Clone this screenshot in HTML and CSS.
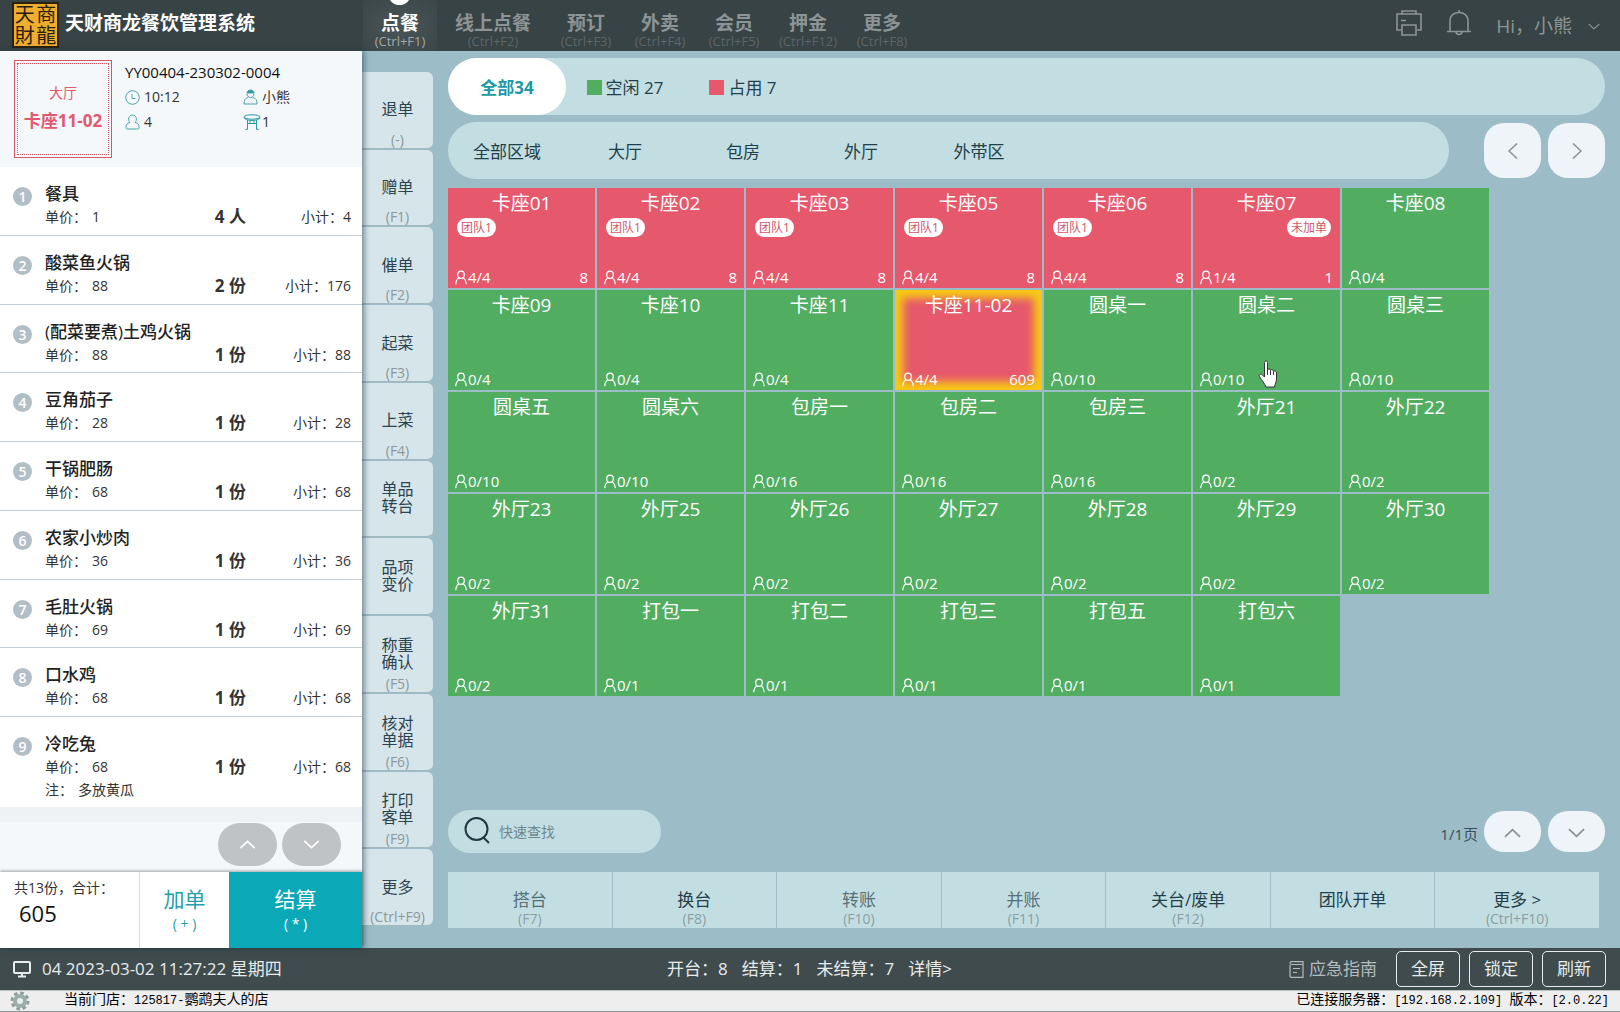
FILE: index.html
```html
<!DOCTYPE html>
<html lang="zh-CN">
<head>
<meta charset="utf-8">
<meta name="viewport" content="width=device-width, initial-scale=1">
<title>天财商龙餐饮管理系统</title>
<link rel="stylesheet" href="styles.css">
</head>
<body>
<svg class="symbols" width="0" height="0" aria-hidden="true">
  <symbol id="guest" viewBox="0 0 12 15"><path d="M6 1.2a3.3 3.6 0 0 1 0 7.2a3.3 3.6 0 0 1 0-7.2M4 7.8C2 9 .9 11.300 .8 14.200M8 7.800C10 9 11.100 11.300 11.200 14.200" fill="none" stroke="currentColor" stroke-width="1.200"/></symbol>
  <symbol id="up" viewBox="0 0 18 10"><path d="M1 9L9 1.500L17 9" fill="none" stroke="currentColor" stroke-width="1.800"/></symbol>
  <symbol id="down" viewBox="0 0 18 10"><path d="M1 1L9 8.500L17 1" fill="none" stroke="currentColor" stroke-width="1.800"/></symbol>
</svg>

<header class="topbar">
  <div class="brand">
    <div class="logo" aria-hidden="true"><span>天</span><span>商</span><span>財</span><span>龍</span></div>
    <h1>天财商龙餐饮管理系统</h1>
  </div>
  <nav class="menu">
    <a href="#" class="active"><b>点餐</b><small>(Ctrl+F1)</small></a>
    <a href="#"><b>线上点餐</b><small>(Ctrl+F2)</small></a>
    <a href="#"><b>预订</b><small>(Ctrl+F3)</small></a>
    <a href="#"><b>外卖</b><small>(Ctrl+F4)</small></a>
    <a href="#"><b>会员</b><small>(Ctrl+F5)</small></a>
    <a href="#"><b>押金</b><small>(Ctrl+F12)</small></a>
    <a href="#"><b>更多</b><small>(Ctrl+F8)</small></a>
  </nav>
  <div class="tools">
    <button type="button" class="tool" aria-label="打印"><svg width="26" height="26" viewBox="0 0 26 26" fill="none" stroke="currentColor" stroke-width="1.600"><path d="M5 20H1V4H25V20H21M6 4V1H20V4M6 15H20V25H6ZM5 10.500H10"/></svg></button>
    <button type="button" class="tool" aria-label="通知"><svg width="26" height="26" viewBox="0 0 26 26" fill="none" stroke="currentColor" stroke-width="1.600"><path d="M1 21.500H25M4 21.500V11C4 5.500 8 2.500 13 2.500S22 5.500 22 11V21.500M13 0V2.500M10 21.500C10 25.500 16 25.500 16 21.500"/></svg></button>
    <button type="button" class="user">Hi，小熊<svg width="12" height="7" viewBox="0 0 18 10"><use href="#down"/></svg></button>
  </div>
</header>

<main class="workspace">
  <aside class="order">
    <section class="order-head">
      <div class="seat"><div class="seat-inner"><span>大厅</span><b>卡座11-02</b></div></div>
      <div class="facts">
        <p class="bill-no">YY00404-230302-0004</p>
        <p><svg width="15" height="15" viewBox="0 0 15 15" fill="none" stroke="#4aa3aa"><circle cx="7.500" cy="7.500" r="6.800"/><path d="M7 4V8.500H10.500"/></svg>10:12</p>
        <p><svg width="15" height="16" viewBox="0 0 15 16" fill="none" stroke="#4aa3aa"><path d="M4 4C4 0 11 0 11 4Z" fill="#2b9aa3"/><path d="M4 4.500C4 7 5.500 8.500 7.500 8.500S11 7 11 4.500M5 8.500C2 9.500 1 11 1 15H14C14 11 13 9.500 10 8.500"/></svg>小熊</p>
        <p><svg width="15" height="16" viewBox="0 0 15 16" fill="none" stroke="#4aa3aa"><path d="M5 8.500C2.500 6 3.500 1 7.500 1S12.500 6 10 8.500C13 9 14 10.500 14 13.500C14 15 13.500 15 12.500 15H2.500C1.500 15 1 15 1 13.500C1 10.500 2 9 5 8.500"/></svg>4</p>
        <p class="tables-used"><svg width="18" height="16" viewBox="0 0 18 16" fill="none" stroke="#2b9aa3"><ellipse cx="9" cy="3" rx="8" ry="2.200"/><path d="M1 3.500C2 7.500 16 7.500 17 3.500M4.500 6V15.500M2.500 15.500H4.500M7 7V10M11 7V10M13.500 6V15.500M13.500 15.500H15.500M4.500 9.500H13.500"/></svg>1</p>
      </div>
    </section>
    <ol class="dishes">
      <li><i>1</i><div><h2>餐具</h2><p class="line"><span>单价：<em>1</em></span><b>4 人</b><span>小计：4</span></p></div></li>
      <li><i>2</i><div><h2>酸菜鱼火锅</h2><p class="line"><span>单价：<em>88</em></span><b>2 份</b><span>小计：176</span></p></div></li>
      <li><i>3</i><div><h2>(配菜要煮)土鸡火锅</h2><p class="line"><span>单价：<em>88</em></span><b>1 份</b><span>小计：88</span></p></div></li>
      <li><i>4</i><div><h2>豆角茄子</h2><p class="line"><span>单价：<em>28</em></span><b>1 份</b><span>小计：28</span></p></div></li>
      <li><i>5</i><div><h2>干锅肥肠</h2><p class="line"><span>单价：<em>68</em></span><b>1 份</b><span>小计：68</span></p></div></li>
      <li><i>6</i><div><h2>农家小炒肉</h2><p class="line"><span>单价：<em>36</em></span><b>1 份</b><span>小计：36</span></p></div></li>
      <li><i>7</i><div><h2>毛肚火锅</h2><p class="line"><span>单价：<em>69</em></span><b>1 份</b><span>小计：69</span></p></div></li>
      <li><i>8</i><div><h2>口水鸡</h2><p class="line"><span>单价：<em>68</em></span><b>1 份</b><span>小计：68</span></p></div></li>
      <li><i>9</i><div><h2>冷吃兔</h2><p class="line"><span>单价：<em>68</em></span><b>1 份</b><span>小计：68</span></p><p class="note">注：<em>多放黄瓜</em></p></div></li>
    </ol>
    <div class="order-pager">
      <button type="button" aria-label="上一页"><svg width="17" height="9"><use href="#up"/></svg></button>
      <button type="button" aria-label="下一页"><svg width="17" height="9"><use href="#down"/></svg></button>
    </div>
    <footer class="order-foot">
      <div class="total"><span>共13份，合计：</span><strong>605</strong></div>
      <button type="button" class="add">加单<small>( + )</small></button>
      <button type="button" class="pay">结算<small>( * )</small></button>
    </footer>
  </aside>

  <nav class="side">
    <button type="button"><span>退单</span><small>(-)</small></button>
    <button type="button"><span>赠单</span><small>(F1)</small></button>
    <button type="button"><span>催单</span><small>(F2)</small></button>
    <button type="button"><span>起菜</span><small>(F3)</small></button>
    <button type="button"><span>上菜</span><small>(F4)</small></button>
    <button type="button"><span>单品<br>转台</span><small></small></button>
    <button type="button"><span>品项<br>变价</span><small></small></button>
    <button type="button"><span>称重<br>确认</span><small>(F5)</small></button>
    <button type="button"><span>核对<br>单据</span><small>(F6)</small></button>
    <button type="button"><span>打印<br>客单</span><small>(F9)</small></button>
    <button type="button"><span>更多</span><small>(Ctrl+F9)</small></button>
  </nav>

  <section class="floor">
    <div class="pill">
      <button type="button" class="tab selected">全部34</button>
      <button type="button" class="tab"><span class="swatch free"></span>空闲 27</button>
      <button type="button" class="tab"><span class="swatch busy"></span>占用 7</button>
    </div>
    <div class="areas">
      <div class="pill">
        <button type="button" class="tab">全部区域</button>
        <button type="button" class="tab">大厅</button>
        <button type="button" class="tab">包房</button>
        <button type="button" class="tab">外厅</button>
        <button type="button" class="tab">外带区</button>
      </div>
      <div class="arrows tall">
        <button type="button" aria-label="向左"><svg width="10" height="16" viewBox="0 0 10 16" fill="none" stroke="currentColor" stroke-width="1.500"><path d="M9 .5L1 8L9 15.500"/></svg></button>
        <button type="button" aria-label="向右"><svg width="10" height="16" viewBox="0 0 10 16" fill="none" stroke="currentColor" stroke-width="1.500"><path d="M1 .5L9 8L1 15.500"/></svg></button>
      </div>
    </div>

    <div class="tables">
      <button type="button" class="table busy"><span class="name">卡座01</span><span class="tag">团队1</span><span class="foot"><svg><use href="#guest"/></svg>4/4<span>8</span></span></button>
      <button type="button" class="table busy"><span class="name">卡座02</span><span class="tag">团队1</span><span class="foot"><svg><use href="#guest"/></svg>4/4<span>8</span></span></button>
      <button type="button" class="table busy"><span class="name">卡座03</span><span class="tag">团队1</span><span class="foot"><svg><use href="#guest"/></svg>4/4<span>8</span></span></button>
      <button type="button" class="table busy"><span class="name">卡座05</span><span class="tag">团队1</span><span class="foot"><svg><use href="#guest"/></svg>4/4<span>8</span></span></button>
      <button type="button" class="table busy"><span class="name">卡座06</span><span class="tag">团队1</span><span class="foot"><svg><use href="#guest"/></svg>4/4<span>8</span></span></button>
      <button type="button" class="table busy"><span class="name">卡座07</span><span class="tag end">未加单</span><span class="foot"><svg><use href="#guest"/></svg>1/4<span>1</span></span></button>
      <button type="button" class="table free"><span class="name">卡座08</span><span class="foot"><svg><use href="#guest"/></svg>0/4</span></button>

      <button type="button" class="table free"><span class="name">卡座09</span><span class="foot"><svg><use href="#guest"/></svg>0/4</span></button>
      <button type="button" class="table free"><span class="name">卡座10</span><span class="foot"><svg><use href="#guest"/></svg>0/4</span></button>
      <button type="button" class="table free"><span class="name">卡座11</span><span class="foot"><svg><use href="#guest"/></svg>0/4</span></button>
      <button type="button" class="table busy current"><span class="name">卡座11-02</span><span class="foot"><svg><use href="#guest"/></svg>4/4<span>609</span></span></button>
      <button type="button" class="table free"><span class="name">圆桌一</span><span class="foot"><svg><use href="#guest"/></svg>0/10</span></button>
      <button type="button" class="table free"><span class="name">圆桌二</span><span class="foot"><svg><use href="#guest"/></svg>0/10</span><svg class="pointer" width="20" height="28" viewBox="0 0 20 28"><path d="M6.500 2.500C6.500 .5 9.500 .5 9.500 2.500V10C10 8.500 12.500 8.500 12.500 10.500C13 9 15.500 9.500 15.500 11.500C16.500 10.500 18.500 11 18.500 13V19C18.500 22 17 23.500 16.500 27H8C7 23.500 3.500 20.500 1.500 16.500C.5 14.500 3 13.500 4.500 15L6.500 17Z" fill="#fff" stroke="#333"/><path d="M9.500 10V15M12.500 11V15M15.500 12V15" stroke="#333"/></svg></button>
      <button type="button" class="table free"><span class="name">圆桌三</span><span class="foot"><svg><use href="#guest"/></svg>0/10</span></button>

      <button type="button" class="table free"><span class="name">圆桌五</span><span class="foot"><svg><use href="#guest"/></svg>0/10</span></button>
      <button type="button" class="table free"><span class="name">圆桌六</span><span class="foot"><svg><use href="#guest"/></svg>0/10</span></button>
      <button type="button" class="table free"><span class="name">包房一</span><span class="foot"><svg><use href="#guest"/></svg>0/16</span></button>
      <button type="button" class="table free"><span class="name">包房二</span><span class="foot"><svg><use href="#guest"/></svg>0/16</span></button>
      <button type="button" class="table free"><span class="name">包房三</span><span class="foot"><svg><use href="#guest"/></svg>0/16</span></button>
      <button type="button" class="table free"><span class="name">外厅21</span><span class="foot"><svg><use href="#guest"/></svg>0/2</span></button>
      <button type="button" class="table free"><span class="name">外厅22</span><span class="foot"><svg><use href="#guest"/></svg>0/2</span></button>

      <button type="button" class="table free"><span class="name">外厅23</span><span class="foot"><svg><use href="#guest"/></svg>0/2</span></button>
      <button type="button" class="table free"><span class="name">外厅25</span><span class="foot"><svg><use href="#guest"/></svg>0/2</span></button>
      <button type="button" class="table free"><span class="name">外厅26</span><span class="foot"><svg><use href="#guest"/></svg>0/2</span></button>
      <button type="button" class="table free"><span class="name">外厅27</span><span class="foot"><svg><use href="#guest"/></svg>0/2</span></button>
      <button type="button" class="table free"><span class="name">外厅28</span><span class="foot"><svg><use href="#guest"/></svg>0/2</span></button>
      <button type="button" class="table free"><span class="name">外厅29</span><span class="foot"><svg><use href="#guest"/></svg>0/2</span></button>
      <button type="button" class="table free"><span class="name">外厅30</span><span class="foot"><svg><use href="#guest"/></svg>0/2</span></button>

      <button type="button" class="table free"><span class="name">外厅31</span><span class="foot"><svg><use href="#guest"/></svg>0/2</span></button>
      <button type="button" class="table free"><span class="name">打包一</span><span class="foot"><svg><use href="#guest"/></svg>0/1</span></button>
      <button type="button" class="table free"><span class="name">打包二</span><span class="foot"><svg><use href="#guest"/></svg>0/1</span></button>
      <button type="button" class="table free"><span class="name">打包三</span><span class="foot"><svg><use href="#guest"/></svg>0/1</span></button>
      <button type="button" class="table free"><span class="name">打包五</span><span class="foot"><svg><use href="#guest"/></svg>0/1</span></button>
      <button type="button" class="table free"><span class="name">打包六</span><span class="foot"><svg><use href="#guest"/></svg>0/1</span></button>
    </div>

    <div class="finder">
      <label class="search"><svg width="26" height="29" viewBox="0 0 26 29" fill="none" stroke="#1d3a42" stroke-width="2"><ellipse cx="12.500" cy="12" rx="11" ry="11"/><path d="M19 20L25 26"/></svg><input type="text" placeholder="快速查找" aria-label="快速查找"></label>
      <span class="page">1/1页</span>
      <div class="arrows">
        <button type="button" aria-label="上一页"><svg width="17" height="10"><use href="#up"/></svg></button>
        <button type="button" aria-label="下一页"><svg width="17" height="10"><use href="#down"/></svg></button>
      </div>
    </div>

    <div class="actions">
      <button type="button" disabled>搭台<small>(F7)</small></button>
      <button type="button">换台<small>(F8)</small></button>
      <button type="button" disabled>转账<small>(F10)</small></button>
      <button type="button" disabled>并账<small>(F11)</small></button>
      <button type="button">关台/废单<small>(F12)</small></button>
      <button type="button">团队开单<small></small></button>
      <button type="button">更多 &gt;<small>(Ctrl+F10)</small></button>
    </div>
  </section>
</main>

<footer class="status">
  <div class="clock"><svg width="18" height="17" viewBox="0 0 18 17" fill="none" stroke="currentColor" stroke-width="2"><rect x="1" y="1" width="16" height="11" rx="1"/><path d="M9 12V15M5 15.500H13"/></svg>04 2023-03-02 11:27:22 星期四</div>
  <div class="counts"><span>开台：8</span><span>结算：1</span><span>未结算：7</span><a href="#">详情&gt;</a></div>
  <div class="controls">
    <a href="#" class="guide"><svg width="15" height="17" viewBox="0 0 15 17" fill="none" stroke="currentColor" stroke-width="1.200"><path d="M1 4V15C1 16 1.500 16.400 2.500 16.400H14V3.500H2.500C.5 3.500 .5 .7 2.500 .7H14V3.500M4 7.500H11M4 11.500H8"/></svg>应急指南</a>
    <button type="button">全屏</button><button type="button">锁定</button><button type="button">刷新</button>
  </div>
</footer>
<div class="sysbar">
  <div class="store"><svg width="20" height="20" viewBox="0 0 20 20"><circle cx="10" cy="10" r="8" fill="none" stroke="#8c9c9b" stroke-width="3" stroke-dasharray="3.500 2.780"/><circle cx="10" cy="10" r="5" fill="#e8eeee" stroke="#9dadac" stroke-width="4"/></svg><span>当前门店：<code>125817-</code>鹦鹉夫人的店</span></div>
  <div>已连接服务器：<code>[192.168.2.109] </code>版本：<code>[2.0.22]</code></div>
</div>
</body>
</html>
```
FILE: styles.css
```css
* { box-sizing: border-box; }

body {
  margin: 0;
  min-height: 100vh;
  display: flex;
  flex-direction: column;
  font-family: "Open Sans", "Noto Sans CJK SC", sans-serif;
  font-size: 14px;
  line-height: 20px;
  color: #333;
  background: #9cbdc7;
}

h1, h2, p, ol { margin: 0; padding: 0; }
ol { list-style: none; }
em, i { font-style: normal; }
a { color: inherit; text-decoration: none; }
svg { display: block; flex: none; }
.symbols { position: absolute; }

button {
  margin: 0;
  padding: 0;
  border: 0;
  background: none;
  color: inherit;
  font: inherit;
  cursor: pointer;
}

/* top bar */
.topbar {
  display: flex;
  height: 51px;
  background: #374345;
  color: #8d9495;
  overflow: hidden;
}
.brand {
  display: flex;
  width: 363px;
  padding: 2px 0 0 12px;
  gap: 6px;
}
.logo {
  display: grid;
  grid-template-columns: 1fr 1fr;
  width: 47px;
  height: 46px;
  border: 2px solid #2a2010;
  background: #f0ae2e;
  color: #2a2010;
  font-size: 20px;
  line-height: 21px;
  text-align: center;
}
.brand h1 {
  color: #fff;
  font-size: 19px;
  line-height: 42px;
}
.menu { display: flex; }
.menu a {
  display: flex;
  flex-direction: column;
  padding: 13px 18px 0;
  text-align: center;
}
.menu b {
  font-size: 19px;
  line-height: 21px;
}
.menu small {
  margin: 0 -18px;
  font-size: 13px;
  line-height: 14px;
  color: #5d6667;
}
.menu .active {
  position: relative;
  color: #fff;
  background: radial-gradient(#4b5557, #3b4648);
}
.menu .active small { color: #a3a9aa; }
.menu .active::before {
  content: "";
  position: absolute;
  top: -18px;
  left: 25px;
  width: 23px;
  height: 23px;
  border-radius: 50%;
  background: #fff;
}
.tools {
  display: flex;
  align-items: center;
  gap: 24px;
  margin-left: auto;
  padding: 0 20px 5px 0;
}
.user {
  display: flex;
  align-items: center;
  gap: 16px;
  font-size: 19px;
  line-height: 24px;
  padding-top: 6px;
}

/* workspace */
.workspace {
  flex: 1;
  display: grid;
  grid-template-columns: 362px 71px 1fr;
}

/* order panel */
.order {
  z-index: 1;
  display: flex;
  flex-direction: column;
  background: #f4f8fa;
  box-shadow: 2px 0 6px rgba(30, 60, 70, .6);
}
.order-head {
  display: flex;
  gap: 13px;
  height: 116px;
  padding: 9px 14px;
}
.seat {
  width: 98px;
  height: 98px;
  padding: 2px;
  border: 1px solid #d9576c;
  color: #e15a70;
}
.seat-inner {
  display: flex;
  flex-direction: column;
  align-items: center;
  gap: 8px;
  height: 100%;
  padding-top: 19px;
  border: 1px dotted #d9576c;
  white-space: nowrap;
}
.seat b { font-size: 17px; }
.facts {
  flex: 1;
  display: grid;
  grid-template-columns: 118px 1fr;
  grid-template-rows: 24px 26px 24px;
  align-content: start;
}
.facts p {
  display: flex;
  align-items: center;
  gap: 4px;
}
.facts .bill-no {
  grid-column: 1 / 3;
  color: #111;
  font-size: 15px;
}
.facts .tables-used { gap: 1px; }
.dishes {
  flex: 1;
  display: flex;
  flex-direction: column;
  border-bottom: 15px solid #eef2f5;
}
.dishes li {
  flex: 1;
  display: flex;
  gap: 13px;
  padding: 16px 11px 0 13px;
  border-bottom: 1px solid #c3ced4;
  background: #fff;
}
.dishes li:last-child {
  flex: none;
  height: 90px;
  border-bottom: 0;
}
.dishes i {
  width: 19px;
  height: 19px;
  margin-top: 4px;
  border-radius: 50%;
  background: #b1bec6;
  color: #fff;
  font-weight: 600;
  line-height: 19px;
  text-align: center;
}
.dishes div { flex: 1; }
.dishes h2 {
  font-size: 17px;
  font-weight: 500;
  line-height: 22px;
  color: #222;
}
.line {
  display: grid;
  grid-template-columns: 1fr 60px 105px;
  line-height: 24px;
  text-align: right;
}
.line span:first-child { text-align: left; }
.line b { font-size: 17px; }
.note { line-height: 22px; }
.dishes em { margin-left: 5px; }
.order-pager {
  display: flex;
  justify-content: flex-end;
  gap: 5px;
  height: 50px;
  padding: 1px 21px 0 0;
}
.order-pager button {
  display: grid;
  place-items: center;
  width: 59px;
  height: 43px;
  border-radius: 22px;
  background: #c0c3c6;
  color: #fff;
}
.order-foot {
  display: grid;
  grid-template-columns: 140px 89px 1fr;
  height: 76px;
  background: #fff;
  box-shadow: 0 -1px 3px rgba(0, 0, 0, .35);
}
.total {
  padding: 6px 0 0 14px;
  border-right: 1px solid #d8dfe3;
}
.total strong {
  display: block;
  padding-left: 5px;
  color: #111;
  font-size: 22px;
  font-weight: 400;
  line-height: 30px;
}
.order-foot button {
  color: #25a0ab;
  font-size: 21px;
  line-height: 28px;
}
.order-foot small {
  display: block;
  font-size: 14px;
  line-height: 22px;
}
.order-foot .pay {
  background: #0ba8b8;
  color: #fff;
}

/* shortcut tabs */
.side {
  display: grid;
  grid-auto-rows: 1fr;
  gap: 1px;
  margin: 21px 0 22px;
}
.side button {
  display: flex;
  flex-direction: column;
  border-radius: 0 6px 6px 0;
  background: #d6e5ea;
  border-bottom: 1px solid #a3b8be;
  color: #2c4350;
  font-size: 16px;
  line-height: 17px;
  text-align: center;
}
.side span {
  flex: 1;
  display: grid;
  place-content: center;
  width: 100%;
  padding-top: 16px;
}
.side small {
  width: 100%;
  height: 16px;
  color: #8c989d;
  font-size: 14px;
  line-height: 15px;
}

/* floor plan */
.floor {
  display: flex;
  flex-direction: column;
  padding: 7px 15px 20px;
}
.pill {
  display: flex;
  flex: 1;
  height: 57px;
  border-radius: 29px;
  background: #c3dee3;
}
.floor > .pill { flex: none; }
.tab {
  display: flex;
  align-items: center;
  justify-content: center;
  gap: 4px;
  width: 118px;
  padding-top: 2px;
  color: #1f3f4a;
  font-size: 17px;
}
.tab.selected {
  border-radius: 29px;
  background: #fff;
  color: #1a9aa4;
  font-weight: 700;
}
.swatch {
  width: 15px;
  height: 15px;
}
.free { background: #51ad60; }
.busy { background: #e6586c; }
.areas {
  display: flex;
  align-items: center;
  gap: 35px;
  margin: 7px 0 9px;
}
.arrows {
  display: flex;
  gap: 7px;
}
.arrows button {
  display: grid;
  place-items: center;
  width: 57px;
  height: 41px;
  padding-top: 2px;
  border-radius: 20px;
  background: #eef4f8;
  color: #8a8f92;
}
.arrows.tall button {
  height: 55px;
  padding-top: 0;
}

.tables {
  display: grid;
  grid-template-columns: repeat(auto-fill, 147px);
  grid-auto-rows: 100px;
  gap: 2px;
}
.table {
  position: relative;
  display: flex;
  flex-direction: column;
  padding: 3px 7px 1px;
  color: #fff;
}
.table.current { box-shadow: inset 0 0 8px 8px #f7cb12; }
.name {
  width: 100%;
  font-size: 19px;
  line-height: 24px;
}
.tag {
  align-self: flex-start;
  margin: 3px 2px;
  padding: 0 4px;
  border-radius: 10px;
  background: #fff;
  color: #d2566a;
  font-size: 12px;
  line-height: 19px;
}
.tag.end { align-self: flex-end; }
.foot {
  display: flex;
  align-items: center;
  gap: 1px;
  width: 100%;
  margin-top: auto;
  font-size: 15px;
}
.foot svg {
  width: 12px;
  height: 15px;
}
.foot span { margin-left: auto; }
.pointer {
  position: absolute;
  top: 70px;
  left: 65px;
}

.finder {
  display: flex;
  align-items: center;
  gap: 6px;
  margin-top: auto;
}
.search {
  display: flex;
  align-items: center;
  gap: 9px;
  width: 213px;
  height: 43px;
  margin-right: auto;
  padding-left: 16px;
  border-radius: 22px;
  background: #c3dee3;
}
.search input {
  width: 130px;
  padding: 0;
  border: 0;
  outline: 0;
  background: none;
  color: #1f3f4a;
  font: inherit;
}
.search input::placeholder { color: #6f868d; }
.page {
  padding-top: 4px;
  color: #35505a;
  font-size: 15px;
}

.actions {
  display: grid;
  grid-template-columns: repeat(7, 1fr);
  gap: 1px;
  margin: 19px 6px 0 0;
}
.actions button {
  height: 56px;
  padding-top: 14px;
  background: #c3dee3;
  color: #1f3f4a;
  font-size: 17px;
  line-height: 24px;
}
.actions button:disabled { color: #587078; }
.actions small {
  display: block;
  height: 14px;
  color: #8a9ea4;
  font-size: 14px;
  line-height: 14px;
}

/* status bars */
.status {
  display: grid;
  grid-template-columns: 1fr auto 1fr;
  align-items: center;
  height: 42px;
  padding: 0 14px 0 13px;
  background: #3f4b4d;
  color: #e8ecec;
  font-size: 17px;
}
.clock {
  display: flex;
  align-items: center;
  gap: 11px;
}
.counts {
  display: flex;
  gap: 14px;
}
.controls {
  display: flex;
  align-items: center;
  justify-content: flex-end;
  gap: 9px;
}
.guide {
  display: flex;
  align-items: center;
  gap: 5px;
  margin-right: 10px;
  color: #b5bcbd;
}
.controls button {
  width: 64px;
  height: 36px;
  border: 1px solid #e8ecec;
  border-radius: 5px;
}
.sysbar {
  display: flex;
  justify-content: space-between;
  height: 22px;
  padding: 0 11px 0 10px;
  border-top: 1px solid #b8c0c0;
  border-bottom: 1px solid #8b9393;
  background: #eee;
  color: #000;
  font-size: 14px;
  line-height: 16px;
}
.sysbar code {
  font-family: "Liberation Mono", monospace;
  font-size: 12px;
}
.store {
  display: flex;
  gap: 34px;
}
```
